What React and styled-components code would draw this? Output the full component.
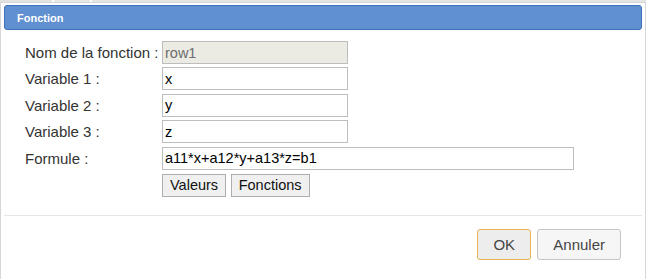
import React from "react";
import styled, { createGlobalStyle } from "styled-components";

const Global = createGlobalStyle`
  html, body { margin: 0; padding: 0; background: #fff; }
  body { font-family: "Liberation Sans", Arial, sans-serif; overflow: hidden; }
  * { box-sizing: border-box; }
`;

const Page = styled.div`
  width: 646px;
  height: 279px;
  display: flex;
  flex-direction: column;
  overflow: hidden;
`;

const Backdrop = styled.div`
  height: 2px;
  flex: none;
  background: linear-gradient(90deg, #e2e2e2 0 52px, #fff 52px 54px, #e6e6e6 54px 90px, #fff 90px 92px, #e4e4e4 92px 100%);
`;

const Dialog = styled.div`
  flex: 1;
  display: flex;
  flex-direction: column;
  border: 1px solid #d6d6d6;
  border-bottom: none;
  padding: 2px 3px 0;
  background: #fff;
`;

const TitleBar = styled.div`
  height: 25px;
  flex: none;
  display: flex;
  align-items: center;
  padding: 0 12px;
  background: #6190d0;
  border: 1px solid #3e70bd;
  border-radius: 3px;
  color: #fff;
  font-size: 11px;
  font-weight: bold;
`;

const Content = styled.div`
  padding: 11px 0 0 21px;
  height: 185px;
  flex: none;
`;

const Form = styled.div`
  display: grid;
  grid-template-columns: 137px auto;
  row-gap: 3.4px;
  align-items: center;
`;

const Label = styled.div`
  font-size: 15px;
  color: #333;
  white-space: nowrap;
`;

const Field = styled.input`
  height: 23px;
  width: ${(p) => p.$w}px;
  border: 1px solid #bdbdbd;
  padding: 0 2px;
  font-family: "Liberation Sans", Arial, sans-serif;
  font-size: 14.5px;
  color: ${(p) => (p.readOnly ? "#6d6d6d" : "#000")};
  background: ${(p) => (p.readOnly ? "#ebebe4" : "#fff")};
  outline: none;
`;

const ToolRow = styled.div`
  display: flex;
  gap: 4.6px;
  margin-top: 0.6px;
`;

const SmallButton = styled.button`
  height: 23px;
  padding: 0 7px;
  border: 1px solid #adadad;
  border-radius: 0;
  background: #f0f0f0;
  font-family: "Liberation Sans", Arial, sans-serif;
  font-size: 14.5px;
  color: #111;
`;

const ButtonPane = styled.div`
  border-top: 1px solid #e6e6e6;
  display: flex;
  justify-content: flex-end;
  gap: 6px;
  padding: 13px 21px 0 0;
`;

const DlgButton = styled.button`
  height: 31px;
  padding: 0 15px;
  border: 1px solid ${(p) => (p.$focus ? "#e9b24f" : "#c5c5c5")};
  background: ${(p) => (p.$focus ? "#ededed" : "#f6f6f6")};
  border-radius: 3px;
  font-family: "Liberation Sans", Arial, sans-serif;
  font-size: 15px;
  color: #454545;
  min-width: ${(p) => p.$min || 0}px;
`;

const rows = [
  { label: "Nom de la fonction :", value: "row1", readOnly: true, w: 186 },
  { label: "Variable 1 :", value: "x", w: 186 },
  { label: "Variable 2 :", value: "y", w: 186 },
  { label: "Variable 3 :", value: "z", w: 186 },
  { label: "Formule :", value: "a11*x+a12*y+a13*z=b1", w: 412 },
];

export default function App() {
  return (
    <Page>
      <Global />
      <Backdrop />
      <Dialog>
        <TitleBar>Fonction</TitleBar>
        <Content>
          <Form>
            {rows.map((r) => (
              <React.Fragment key={r.label}>
                <Label>{r.label}</Label>
                <Field $w={r.w} readOnly={r.readOnly} defaultValue={r.value} />
              </React.Fragment>
            ))}
            <span />
            <ToolRow>
              <SmallButton>Valeurs</SmallButton>
              <SmallButton>Fonctions</SmallButton>
            </ToolRow>
          </Form>
        </Content>
        <ButtonPane>
          <DlgButton $focus $min={54}>OK</DlgButton>
          <DlgButton>Annuler</DlgButton>
        </ButtonPane>
      </Dialog>
    </Page>
  );
}
